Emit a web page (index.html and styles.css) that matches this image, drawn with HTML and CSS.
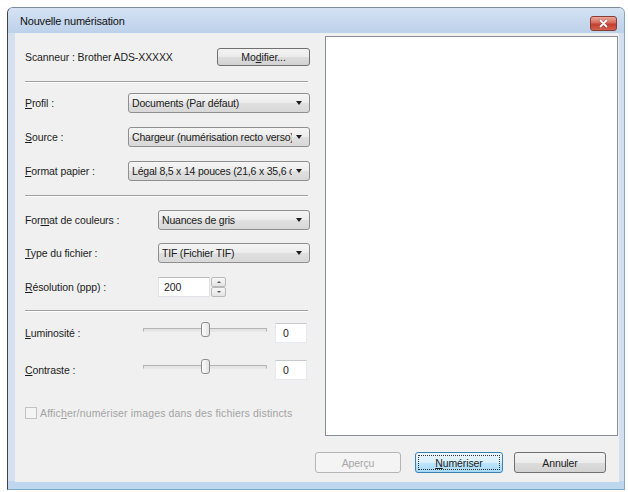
FILE: index.html
```html
<!DOCTYPE html>
<html lang="fr">
<head>
  <meta charset="UTF-8">
  <title>Nouvelle numérisation</title>
  <link rel="stylesheet" href="styles.css">
</head>
<body>
  <div class="window">
    <div class="titlebar">
      <span class="title">Nouvelle numérisation</span>
      <span class="close">
        <svg width="27" height="15" viewBox="0 0 27 15">
          <path d="M10.5 4.5 L16.5 10.5 M16.5 4.5 L10.5 10.5" stroke="#5a1a14" stroke-width="3" stroke-linecap="round" opacity="0.35"/>
          <path d="M10.5 4.5 L16.5 10.5 M16.5 4.5 L10.5 10.5" stroke="#fff" stroke-width="1.8" stroke-linecap="round"/>
        </svg>
      </span>
    </div>

    <div class="client">
      <div class="main">
        <div class="settings">
          <div class="row scanner-row">
            <span>Scanneur : Brother ADS-XXXXX</span>
            <span class="btn modify">Mo<u>d</u>ifier...</span>
          </div>

          <div class="sep sep-top"></div>

          <div class="row r-profile">
            <span class="lbl lbl-a"><u>P</u>rofil :</span>
            <div class="combo"><span class="combo-text">Documents (Par défaut)</span><span class="arrow"></span></div>
          </div>
          <div class="row r-gap">
            <span class="lbl lbl-a"><u>S</u>ource :</span>
            <div class="combo"><span class="combo-text">Chargeur (numérisation recto verso)</span><span class="arrow"></span></div>
          </div>
          <div class="row r-gap">
            <span class="lbl lbl-a"><u>F</u>ormat papier :</span>
            <div class="combo"><span class="combo-text">Légal 8,5 x 14 pouces (21,6 x 35,6 cm)</span><span class="arrow"></span></div>
          </div>

          <div class="sep sep-mid"></div>

          <div class="row r-colour">
            <span class="lbl lbl-b">For<u>m</u>at de couleurs :</span>
            <div class="combo"><span class="combo-text">Nuances de gris</span><span class="arrow"></span></div>
          </div>
          <div class="row r-type">
            <span class="lbl lbl-b"><u>T</u>ype du fichier :</span>
            <div class="combo"><span class="combo-text">TIF (Fichier TIF)</span><span class="arrow"></span></div>
          </div>
          <div class="row r-gap">
            <span class="lbl lbl-b"><u>R</u>ésolution (ppp) :</span>
            <div class="spin-input">200</div>
            <div class="spin">
              <span class="spin-btn"><span class="tri up"></span></span>
              <span class="spin-btn"><span class="tri down"></span></span>
            </div>
          </div>

          <div class="sep sep-low"></div>

          <div class="row r-bright">
            <span class="lbl lbl-c"><u>L</u>uminosité :</span>
            <div class="slider"><span class="thumb"></span></div>
            <div class="value">0</div>
          </div>
          <div class="row r-contrast">
            <span class="lbl lbl-c"><u>C</u>ontraste :</span>
            <div class="slider"><span class="thumb"></span></div>
            <div class="value">0</div>
          </div>

          <div class="check-row">
            <span class="checkbox"></span>
            <span>Affic<u>h</u>er/numériser images dans des fichiers distincts</span>
          </div>
        </div>

        <div class="preview"></div>
      </div>

      <div class="actions">
        <span class="btn btn-preview">Aperçu</span>
        <span class="btn btn-scan"><span class="focus"><u>N</u>umériser</span></span>
        <span class="btn btn-cancel">Annuler</span>
      </div>
    </div>
  </div>
</body>
</html>
```

FILE: styles.css
```css
body {
  margin: 0;
  background: #fff;
  font-family: "Liberation Sans", Arial, sans-serif;
  font-size: 10.5px;
  letter-spacing: -0.1px;
  color: #1c1c1c;
}

u {
  text-underline-offset: 1px;
}

/* window frame (Windows 7 basic look) */
.window {
  margin: 7px 0 0 7px;
  width: 618px;
  height: 483px;
  box-sizing: border-box;
  display: flex;
  flex-direction: column;
  padding: 0 5px 7px 7px;
  border: 1px solid;
  border-color: #7d8a9b #8ea3bb #7ea4c8 #3e4246;
  border-radius: 6px 6px 0 0;
  background: linear-gradient(to bottom, #d4dff0 calc(100% - 8px), #bfd7ee calc(100% - 8px));
}

.titlebar {
  height: 25px;
  margin: 0 -5px 0 -7px;
  padding: 0 7px 0 12px;
  display: flex;
  align-items: flex-start;
  justify-content: space-between;
  border-radius: 5px 5px 0 0;
  background: linear-gradient(#d5e2f3, #bcd1ea);
}

.title {
  margin-top: 7px;
  line-height: 13px;
  font-size: 11px;
  letter-spacing: -0.2px;
  color: #111;
}

.close {
  margin-top: 8px;
  width: 27px;
  height: 15px;
  box-sizing: border-box;
  border: 1px solid #8a3b33;
  border-radius: 3px;
  background: linear-gradient(#eaa999, #d66a5b 45%, #c43f2f 55%, #d0614f);
  display: flex;
}

.close svg {
  margin: -1px;
}

.client {
  flex: 1;
  background: #f0f0f0;
  display: flex;
  flex-direction: column;
}

.main {
  display: flex;
  height: 403px;
}

.settings {
  width: 285px;
  padding: 0 15px 0 10px;
  display: flex;
  flex-direction: column;
}

.preview {
  margin: 3px 1px 0 0;
  width: 293px;
  height: 400px;
  box-sizing: border-box;
  border: 1px solid #8b9098;
  background: #fff;
}

/* rows of the settings column */
.row {
  display: flex;
  align-items: center;
  height: 20px;
}

.scanner-row {
  margin-top: 15px;
  height: 18px;
  justify-content: space-between;
}

.r-profile { margin-top: 10px; }
.r-gap { margin-top: 14px; }
.r-colour { margin-top: 13px; }
.r-type { margin-top: 13px; }
.r-bright { margin-top: 11px; }
.r-contrast { margin-top: 17px; }

.sep {
  height: 0;
  margin-right: 2px;
  border-top: 1px solid #a0a0a0;
  border-bottom: 1px solid #fff;
}

.sep-top { margin-top: 15px; }
.sep-mid { margin-top: 14px; }
.sep-low { margin-top: 13px; }

.lbl {
  flex: none;
}

.lbl-a { width: 103px; }
.lbl-b { width: 133px; }
.lbl-c { width: 118px; }

/* drop-down lists */
.combo {
  flex: 1;
  min-width: 0;
  height: 20px;
  box-sizing: border-box;
  display: flex;
  align-items: center;
  padding: 0 7px 0 3px;
  border: 1px solid #8f8f8f;
  border-radius: 3px;
  background: linear-gradient(#f5f5f5, #ececec 50%, #e0e0e0 51%, #d8d8d8);
}

.combo-text {
  flex: 1;
  overflow: hidden;
  white-space: nowrap;
  letter-spacing: -0.2px;
  color: #202020;
}

.arrow {
  flex: none;
  margin-left: 4px;
  width: 0;
  height: 0;
  border-left: 3.5px solid transparent;
  border-right: 3.5px solid transparent;
  border-top: 4px solid #1e1e1e;
}

/* resolution spin box */
.spin-input {
  width: 52px;
  height: 20px;
  box-sizing: border-box;
  padding: 3px 0 0 5px;
  background: #fff;
  border: 1px solid #dfe3e8;
  border-top-color: #b8bcc2;
}

.spin {
  margin-left: 1px;
  display: flex;
  flex-direction: column;
  height: 20px;
}

.spin-btn {
  width: 15px;
  height: 10px;
  box-sizing: border-box;
  border: 1px solid #b9b9b9;
  border-radius: 2px;
  background: linear-gradient(#f7f7f7, #e4e4e4);
  display: flex;
  align-items: center;
  justify-content: center;
}

.tri {
  width: 0;
  height: 0;
  border-left: 2px solid transparent;
  border-right: 2px solid transparent;
}

.tri.up { border-bottom: 2px solid #555; }
.tri.down { border-top: 2px solid #555; }

/* trackbars */
.slider {
  position: relative;
  width: 124px;
  height: 20px;
  margin-right: 8px;
}

.slider::before {
  content: "";
  position: absolute;
  left: 0;
  right: 0;
  top: 5px;
  height: 2px;
  border: 1px solid #b4b4b4;
  border-bottom-color: #e8e8e8;
  background: #e2e4e6;
}

.thumb {
  position: absolute;
  left: 58px;
  top: -1px;
  width: 9px;
  height: 15px;
  box-sizing: border-box;
  border: 1px solid #8d8d8d;
  border-radius: 3px;
  background: linear-gradient(to right, #fdfdfd, #e3e3e3);
}

.value {
  width: 32px;
  height: 20px;
  box-sizing: border-box;
  padding: 3px 0 0 7px;
  background: #fff;
  border: 1px solid #e6e9ee;
  border-top-color: #c6c9ce;
}

.check-row {
  margin-top: 27px;
  display: flex;
  align-items: center;
  gap: 3px;
  height: 12px;
  letter-spacing: 0.15px;
  color: #a3a3a3;
}

.checkbox {
  width: 12px;
  height: 12px;
  box-sizing: border-box;
  border: 1px solid #c2c2c2;
  background: #f4f4f4;
}

/* push buttons */
.btn {
  height: 21px;
  box-sizing: border-box;
  display: flex;
  align-items: center;
  justify-content: center;
  border: 1px solid #707070;
  border-radius: 3px;
  background: linear-gradient(#f3f3f3, #ebebeb 50%, #dddddd 51%, #d2d2d2);
  color: #1c1c1c;
}

.modify {
  width: 93px;
  height: 18px;
}

.actions {
  display: flex;
  justify-content: flex-end;
  margin-top: 16px;
  padding-right: 13px;
}

.btn-preview {
  width: 86px;
  border-color: #b5b5b5;
  background: #f4f4f4;
  color: #a6a6a6;
}

.btn-scan {
  width: 88px;
  margin-left: 14px;
  border-color: #3c7fb1;
  background: linear-gradient(#eaf6fd, #d9f0fc 50%, #bee6fd 51%, #a7d9f5);
  padding: 2px;
}

.focus {
  flex: 1;
  align-self: stretch;
  display: flex;
  align-items: center;
  justify-content: center;
  border: 1px dotted #333;
}

.btn-cancel {
  width: 92px;
  margin-left: 11px;
}
```
